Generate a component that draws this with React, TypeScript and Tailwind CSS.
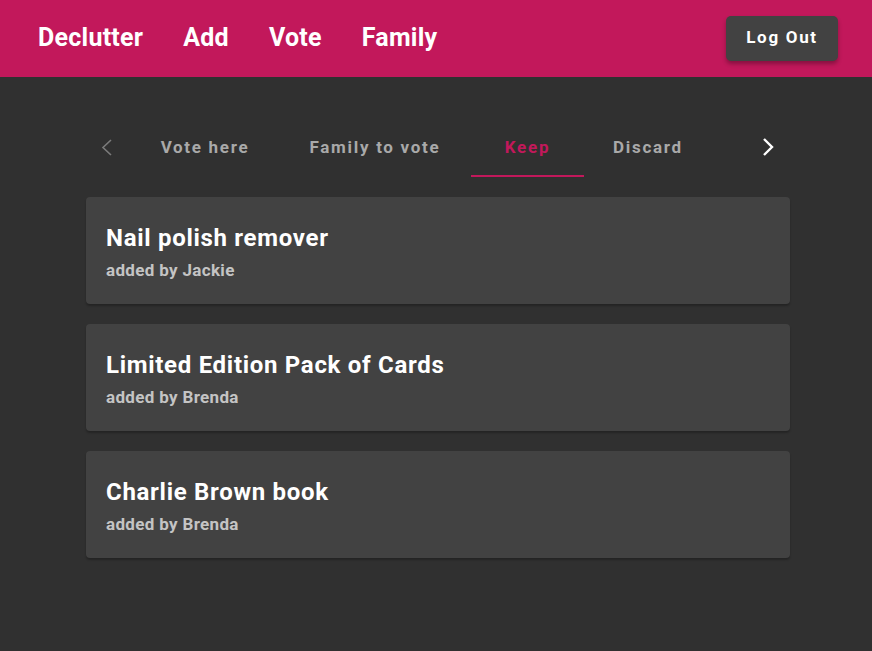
const items = [
  { name: "Nail polish remover", by: "Jackie" },
  { name: "Limited Edition Pack of Cards", by: "Brenda" },
  { name: "Charlie Brown book", by: "Brenda" },
];

const tabs = [
  { label: "Vote here", w: "w-[158px]" },
  { label: "Family to vote", w: "w-[187px] pr-[5px]" },
  { label: "Keep", w: "w-[113px]", active: true },
  { label: "Discard", w: "w-[128px]" },
];

export default function App() {
  return (
    <div className="min-h-screen bg-[#303030] font-['Roboto',sans-serif]">
      <header className="h-[77px] bg-[#c2185b] flex items-center pl-[38px] pr-[34px]">
        <nav className="flex gap-10 text-[25px] leading-[30px] mb-[1px] font-bold tracking-[0.25px] text-white">
          <span>Declutter</span>
          <span>Add</span>
          <span>Vote</span>
          <span>Family</span>
        </nav>
        <button className="ml-auto h-[45px] w-[112px] mb-[1px] rounded-[5px] bg-[#424242] text-white text-[17px] font-bold tracking-[1.7px] shadow-[0_3px_4px_rgba(0,0,0,0.3)]">
          Log Out
        </button>
      </header>

      <main className="ml-[86px] w-[704px] pt-[52px]">
        <div className="flex h-[48px]">
          <div className="w-[40px] flex items-start justify-center">
            <svg width="40" height="36" viewBox="0 0 40 36">
              <polyline points="25,11 17,18.5 25,26" fill="none" stroke="#7b7b7b" strokeWidth="1.6" />
            </svg>
          </div>
          {tabs.map((t) => (
            <div
              key={t.label}
              className={`${t.w} flex justify-center pt-[8px] text-[17px] leading-[20px] font-bold tracking-[1.7px] ${
                t.active ? "text-[#c2185b] border-b-2 border-[#c2185b]" : "text-[#a9a9a9]"
              }`}
            >
              {t.label}
            </div>
          ))}
          <div className="flex-1" />
          <div className="w-[40px] flex items-start justify-center">
            <svg width="40" height="36" viewBox="0 0 40 36">
              <polyline points="14,10 22,18 14,26" fill="none" stroke="#ffffff" strokeWidth="2.4" />
            </svg>
          </div>
        </div>

        {/* item list */}
        <div className="mt-[20px] flex flex-col gap-5">
          {items.map((it) => (
            <div
              key={it.name}
              className="h-[107px] rounded-[4px] bg-[#424242] px-5 pt-[25px] shadow-[0_2px_2px_rgba(0,0,0,0.25)]"
            >
              <div className="text-[24px] leading-[32px] font-bold tracking-[0.7px] text-white">{it.name}</div>
              <div className="mt-[4px] text-[17px] leading-[24px] font-bold tracking-[0.33px] text-[#c4c4c4]">
                added by {it.by}
              </div>
            </div>
          ))}
        </div>
      </main>
    </div>
  );
}
